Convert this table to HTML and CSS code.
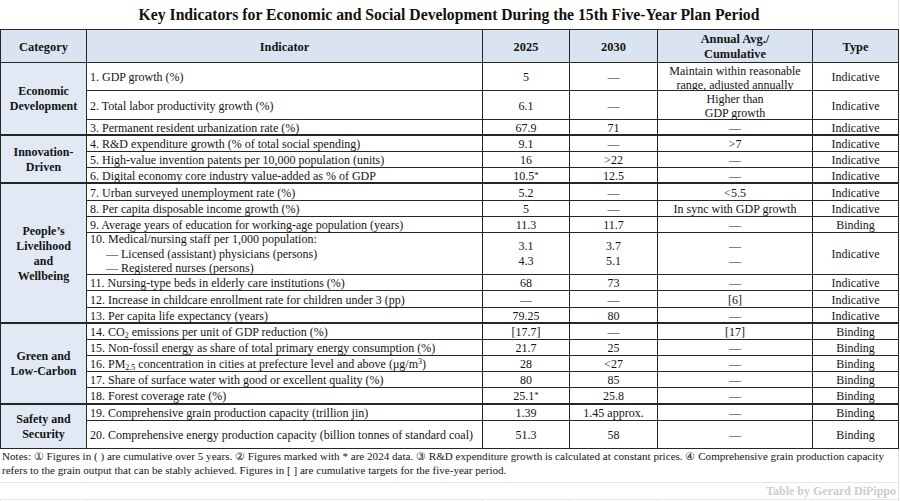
FILE: index.html
```html
<!DOCTYPE html>
<html lang="en">
<head>
<meta charset="utf-8">
<title>Key Indicators</title>
<link rel="stylesheet" href="styles.css">
</head>
<body>
<div class="page">
  <h1 class="title">Key Indicators for Economic and Social Development During the 15th Five-Year Plan Period</h1>
  <div class="grid">
    <div class="c hd"><span>Category</span></div>
    <div class="c hd"><span>Indicator</span></div>
    <div class="c hd"><span>2025</span></div>
    <div class="c hd"><span>2030</span></div>
    <div class="c hd hd2"><span>Annual Avg./<br>Cumulative</span></div>
    <div class="c hd"><span>Type</span></div>

    <div class="c cat s3 end"><span>Economic<br>Development</span></div>
    <div class="c ind"><span>1. GDP growth (%)</span></div>
    <div class="c"><span>5</span></div>
    <div class="c"><span>—</span></div>
    <div class="c tall"><span>Maintain within reasonable<br>range, adjusted annually</span></div>
    <div class="c"><span>Indicative</span></div>

    <div class="c ind"><span>2. Total labor productivity growth (%)</span></div>
    <div class="c"><span>6.1</span></div>
    <div class="c"><span>—</span></div>
    <div class="c tall"><span>Higher than<br>GDP growth</span></div>
    <div class="c"><span>Indicative</span></div>

    <div class="c ind end"><span>3. Permanent resident urbanization rate (%)</span></div>
    <div class="c end"><span>67.9</span></div>
    <div class="c end"><span>71</span></div>
    <div class="c end"><span>—</span></div>
    <div class="c end"><span>Indicative</span></div>

    <div class="c cat s3 end"><span>Innovation-<br>Driven</span></div>
    <div class="c ind"><span>4. R&amp;D expenditure growth (% of total social spending)</span></div>
    <div class="c"><span>9.1</span></div>
    <div class="c"><span>—</span></div>
    <div class="c"><span>&gt;7</span></div>
    <div class="c"><span>Indicative</span></div>

    <div class="c ind"><span>5. High-value invention patents per 10,000 population (units)</span></div>
    <div class="c"><span>16</span></div>
    <div class="c"><span>&gt;22</span></div>
    <div class="c"><span>—</span></div>
    <div class="c"><span>Indicative</span></div>

    <div class="c ind end"><span>6. Digital economy core industry value-added as % of GDP</span></div>
    <div class="c end"><span>10.5<sup class="ast">*</sup></span></div>
    <div class="c end"><span>12.5</span></div>
    <div class="c end"><span>—</span></div>
    <div class="c end"><span>Indicative</span></div>

    <div class="c cat s7 end"><span>People’s<br>Livelihood<br>and<br>Wellbeing</span></div>
    <div class="c ind"><span>7. Urban surveyed unemployment rate (%)</span></div>
    <div class="c"><span>5.2</span></div>
    <div class="c"><span>—</span></div>
    <div class="c"><span>&lt;5.5</span></div>
    <div class="c"><span>Indicative</span></div>

    <div class="c ind"><span>8. Per capita disposable income growth (%)</span></div>
    <div class="c"><span>5</span></div>
    <div class="c"><span>—</span></div>
    <div class="c"><span>In sync with GDP growth</span></div>
    <div class="c"><span>Indicative</span></div>

    <div class="c ind"><span>9. Average years of education for working-age population (years)</span></div>
    <div class="c"><span>11.3</span></div>
    <div class="c"><span>11.7</span></div>
    <div class="c"><span>—</span></div>
    <div class="c"><span>Binding</span></div>

    <div class="c ind multi"><span>10. Medical/nursing staff per 1,000 population:<br><span class="sub-item">— Licensed (assistant) physicians (persons)</span><br><span class="sub-item">— Registered nurses (persons)</span></span></div>
    <div class="c pair"><span>3.1<br>4.3</span></div>
    <div class="c pair"><span>3.7<br>5.1</span></div>
    <div class="c pair"><span>—<br>—</span></div>
    <div class="c"><span>Indicative</span></div>

    <div class="c ind"><span>11. Nursing-type beds in elderly care institutions (%)</span></div>
    <div class="c"><span>68</span></div>
    <div class="c"><span>73</span></div>
    <div class="c"><span>—</span></div>
    <div class="c"><span>Indicative</span></div>

    <div class="c ind"><span>12. Increase in childcare enrollment rate for children under 3 (pp)</span></div>
    <div class="c"><span>—</span></div>
    <div class="c"><span>—</span></div>
    <div class="c"><span>[6]</span></div>
    <div class="c"><span>Indicative</span></div>

    <div class="c ind end"><span>13. Per capita life expectancy (years)</span></div>
    <div class="c end"><span>79.25</span></div>
    <div class="c end"><span>80</span></div>
    <div class="c end"><span>—</span></div>
    <div class="c end"><span>Indicative</span></div>

    <div class="c cat s5 end"><span>Green and<br>Low-Carbon</span></div>
    <div class="c ind"><span>14. CO<sub>2</sub> emissions per unit of GDP reduction (%)</span></div>
    <div class="c"><span>[17.7]</span></div>
    <div class="c"><span>—</span></div>
    <div class="c"><span>[17]</span></div>
    <div class="c"><span>Binding</span></div>

    <div class="c ind"><span>15. Non-fossil energy as share of total primary energy consumption (%)</span></div>
    <div class="c"><span>21.7</span></div>
    <div class="c"><span>25</span></div>
    <div class="c"><span>—</span></div>
    <div class="c"><span>Binding</span></div>

    <div class="c ind"><span>16. PM<sub>2.5</sub> concentration in cities at prefecture level and above (μg/m<sup>3</sup>)</span></div>
    <div class="c"><span>28</span></div>
    <div class="c"><span>&lt;27</span></div>
    <div class="c"><span>—</span></div>
    <div class="c"><span>Binding</span></div>

    <div class="c ind"><span>17. Share of surface water with good or excellent quality (%)</span></div>
    <div class="c"><span>80</span></div>
    <div class="c"><span>85</span></div>
    <div class="c"><span>—</span></div>
    <div class="c"><span>Binding</span></div>

    <div class="c ind end"><span>18. Forest coverage rate (%)</span></div>
    <div class="c end"><span>25.1<sup class="ast">*</sup></span></div>
    <div class="c end"><span>25.8</span></div>
    <div class="c end"><span>—</span></div>
    <div class="c end"><span>Binding</span></div>

    <div class="c cat s2"><span>Safety and<br>Security</span></div>
    <div class="c ind"><span>19. Comprehensive grain production capacity (trillion jin)</span></div>
    <div class="c"><span>1.39</span></div>
    <div class="c"><span>1.45 approx.</span></div>
    <div class="c"><span>—</span></div>
    <div class="c"><span>Binding</span></div>

    <div class="c ind"><span>20. Comprehensive energy production capacity (billion tonnes of standard coal)</span></div>
    <div class="c"><span>51.3</span></div>
    <div class="c"><span>58</span></div>
    <div class="c"><span>—</span></div>
    <div class="c"><span>Binding</span></div>
  </div>
  <div class="notes">Notes: ① Figures in ( ) are cumulative over 5 years. ② Figures marked with * are 2024 data. ③ R&amp;D expenditure growth is calculated at constant prices. ④ Comprehensive grain production capacity refers to the grain output that can be stably achieved. Figures in [ ] are cumulative targets for the five-year period.</div>
  <div class="credit">Table by Gerard DiPippo</div>
  <div class="ghost">
    <div class="g"></div><div class="g"></div><div class="g"></div><div class="g"></div><div class="g"></div><div class="g"></div>
  </div>
</div>
</body>
</html>
```

FILE: styles.css
```css
html, body {
  margin: 0;
  padding: 0;
  background: #ffffff;
}

body {
  font-family: "Liberation Serif", "Times New Roman", serif;
  color: #141414;
}

.page {
  width: 900px;
}

.title {
  margin: 0;
  box-sizing: border-box;
  width: 899px;
  height: 29px;
  padding-top: 1px;
  display: flex;
  align-items: center;
  justify-content: center;
  font-size: 15.7px;
  font-weight: bold;
  color: #111;
  border-right: 1px solid #e4e4e4;
}

.grid {
  box-sizing: border-box;
  width: 899px;
  display: grid;
  grid-template-columns: 86px 396px 87px 88px 155px 86px;
  grid-template-rows: 33px 28px 29px 16px 16px 16px 16px 17px 16px 16px 42px 16px 17px 16px 16px 16px 16px 16px 17px 16px 28px;
  border-left: 1px solid #262626;
  border-top: 1px solid #262626;
}

.c {
  box-sizing: border-box;
  border-right: 1px solid #262626;
  border-bottom: 1px solid #262626;
  display: flex;
  align-items: center;
  justify-content: center;
  text-align: center;
  font-size: 12px;
  line-height: 14px;
  padding-top: 1px;
  overflow: hidden;
  white-space: nowrap;
}

.ind {
  justify-content: flex-start;
  text-align: left;
  padding-left: 3px;
}

.hd {
  background: #dae4f0;
  font-weight: bold;
  font-size: 12.4px;
}

.hd2 {
  line-height: 15px;
}

.cat {
  background: #e1e9f4;
  font-weight: bold;
  line-height: 15px;
}

.tall span {
  display: block;
  padding-top: 1px;
}

.multi {
  line-height: 14.5px;
}

.sub-item {
  padding-left: 16px;
}

.pair {
  line-height: 15px;
}

.end {
  border-bottom-width: 2px;
}

.s2 { grid-row: span 2; }
.s3 { grid-row: span 3; }
.s5 { grid-row: span 5; }
.s7 { grid-row: span 7; }

sub, sup {
  font-size: 8px;
  line-height: 0;
}

sub {
  vertical-align: -2px;
}

sup {
  vertical-align: 4px;
}

sup.ast {
  font-size: 9px;
  vertical-align: 2px;
}

.notes {
  box-sizing: border-box;
  width: 899px;
  height: 34px;
  padding: 0 2px;
  font-size: 11.1px;
  line-height: 14px;
  color: #161616;
  border-right: 1px solid #e6e6e6;
  border-bottom: 1px solid #e6e6e6;
}

.credit {
  box-sizing: border-box;
  width: 899px;
  height: 17px;
  padding-right: 2px;
  text-align: right;
  font-size: 12px;
  font-weight: bold;
  line-height: 16px;
  color: #cdcdcd;
  border-right: 1px solid #e6e6e6;
  border-bottom: 1px solid #e6e6e6;
}

.ghost {
  box-sizing: border-box;
  width: 899px;
  height: 4px;
  display: grid;
  grid-template-columns: 86px 396px 87px 88px 155px 86px;
  border-left: 1px solid #e6e6e6;
}

.g {
  border-right: 1px solid #e6e6e6;
}
```
